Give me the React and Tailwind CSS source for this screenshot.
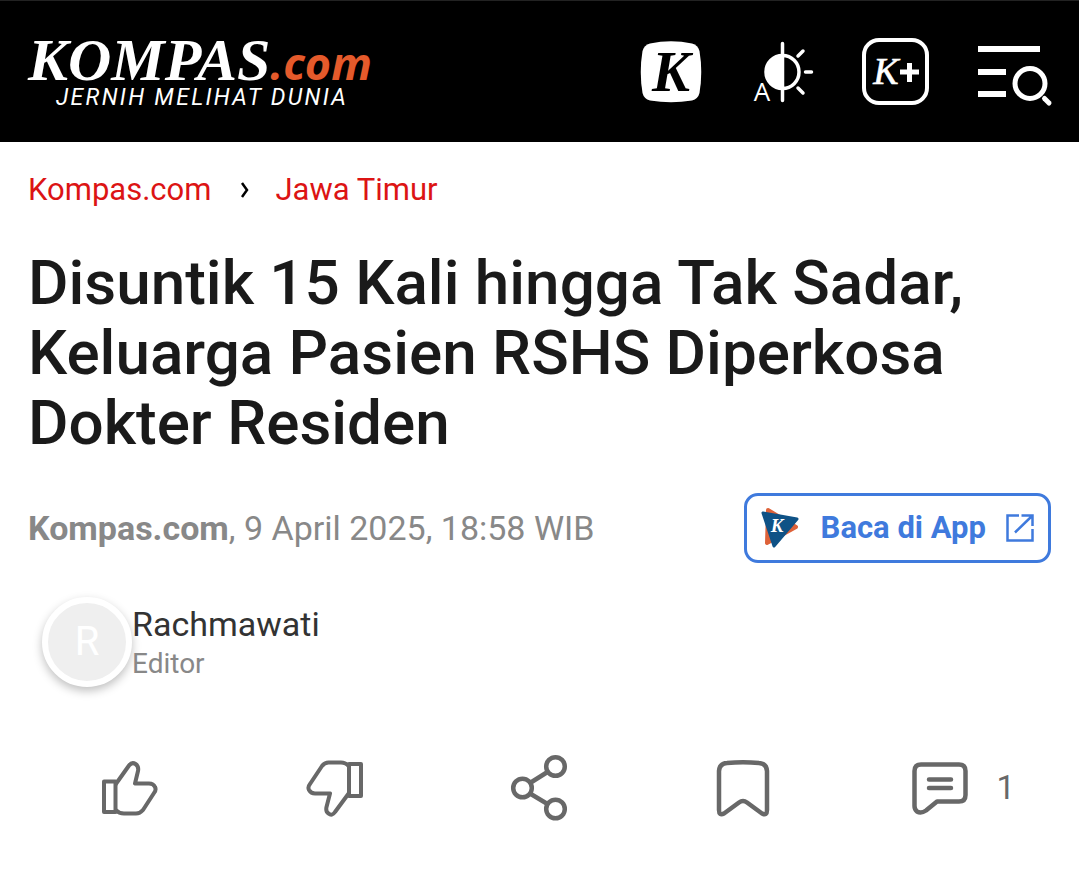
const KompasLogo = () => (
  <a href="#" className="flex flex-col pb-1 text-white">
    <span className="flex items-baseline italic">
      <span className="font-['Liberation_Serif',serif] font-bold text-[60px] leading-[60px]">KOMPAS</span>
      <span className="font-['Open_Sans',sans-serif] font-bold text-[45px] leading-[45px] text-[#e55a2b]">.com</span>
    </span>
    <span className="pl-7 -mt-1 text-[23px] leading-6 italic tracking-widest">JERNIH MELIHAT DUNIA</span>
  </a>
);

const KIcon = () => (
  <svg className="overflow-visible" width="62" height="62" viewBox="0 0 62 62">
    <path d="M10 2.500Q31-2 52 2.500Q58 4 59.500 10Q63 31 59.500 52Q58 58 52 59.500Q31 63 10 59.500Q4 58 2.500 52Q-1 31 2.500 10Q4 4 10 2.500Z" fill="#fff" />
    <text x="31" y="50" textAnchor="middle" fontFamily="Liberation Serif, serif" fontSize="57" fontWeight="700" fontStyle="italic">K</text>
  </svg>
);

const ThemeIcon = () => (
  <svg className="overflow-visible" width="60" height="62" viewBox="0 0 60 62" fill="none" stroke="#fff" strokeWidth="3.500" strokeLinecap="round">
    <circle cx="28.500" cy="31" r="16.500" />
    <path d="M28 14A17 17 0 0 0 11 31A17 17 0 0 0 28 48Z" fill="#fff" stroke="none" />
    <path d="M28.500 2.500V59.500M44 15L49 10M51.500 31H57.500M44 47L49 52" />
    <text x="8" y="60" textAnchor="middle" fontFamily="Open Sans, sans-serif" fontSize="26" fill="#fff" stroke="#000" strokeWidth="4" paintOrder="stroke">A</text>
  </svg>
);

const KPlusIcon = () => (
  <svg width="68" height="68" viewBox="0 0 68 68">
    <rect x="2" y="2" width="63" height="63" rx="15" fill="none" stroke="#fff" strokeWidth="4" />
    <text x="24" y="46" textAnchor="middle" fontFamily="Liberation Serif, serif" fontSize="38" fontStyle="italic" fill="#fff" stroke="#fff" strokeWidth="0.6">K</text>
    <path d="M38 34H57M47.500 25V44" stroke="#fff" strokeWidth="5" />
  </svg>
);

const MenuSearchIcon = () => (
  <svg width="76" height="62" viewBox="0 0 76 62" fill="none" stroke="#fff">
    <path d="M0 4H62M0 27H28M0 49H28" strokeWidth="6" />
    <circle cx="52" cy="38.500" r="15" strokeWidth="5" />
    <path d="M66.500 53.500L71 58" strokeWidth="5" strokeLinecap="round" />
  </svg>
);

const AppIcon = () => (
  <svg width="40" height="42" viewBox="0 0 40 42" strokeLinejoin="round">
    <path d="M7 3L35 20L6 36Z" fill="#de6239" stroke="#de6239" strokeWidth="4" />
    <path d="M2 6L36 12L13 39Z" fill="#0f5286" stroke="#0f5286" strokeWidth="3" />
    <text x="16" y="25" textAnchor="middle" fontFamily="Liberation Serif, serif" fontSize="19" fontWeight="700" fontStyle="italic" fill="#fff">K</text>
  </svg>
);

const OpenIcon = () => (
  <svg width="28" height="28" viewBox="0 0 28 28" fill="none" stroke="#3f7add" strokeWidth="2.5">
    <path d="M13 1.500H1.500V26.500H26.500V15" />
    <path d="M15.500 1.500H26.500V12M26.500 1.500L9 18.500" />
  </svg>
);

const LikeIcon = () => (
  <svg width="58" height="56" viewBox="0 0 58 56" fill="none" stroke="#686868" strokeWidth="4" strokeLinejoin="round">
    <path d="M3 21.500H14.500V52H3Z" />
    <path d="M14.500 24.500L28 5.500Q31 1.500 34.500 4Q38 6.500 37 11L34 23.500H48Q52.500 23.500 54 27Q55.500 30 53 33L42 50Q39 53.500 35 53.500H23Q18 53.500 14.500 50" />
  </svg>
);

const DislikeIcon = () => (
  <svg width="58" height="58" viewBox="0 0 58 58" fill="none" stroke="#686868" strokeWidth="4" strokeLinejoin="round">
    <path d="M43 5H55V37H43Z" />
    <path d="M43 34L29 53Q26 57.500 22.500 54.500Q19.500 52.500 20.500 48L24 34.500H9Q5 34.500 3 31Q1.500 28 4 25L16 7Q18.500 3.500 22.500 3.500H35Q40 3.500 43 7.500" />
  </svg>
);

const ShareIcon = () => (
  <svg width="58" height="68" viewBox="0 0 58 68" fill="none" stroke="#686868" strokeWidth="4.500">
    <circle cx="12.500" cy="34" r="9.300" />
    <circle cx="45.500" cy="12.500" r="9.300" />
    <circle cx="45.500" cy="55" r="9.300" />
    <path d="M20 29L37.500 18M20 39.500L37.500 50" />
  </svg>
);

const BookmarkIcon = () => (
  <svg width="56" height="58" viewBox="0 0 56 58" fill="none" stroke="#686868" strokeWidth="4.500" strokeLinejoin="round">
    <path d="M11 4Q27 2.500 43 4Q50.500 4.500 51 12V51Q51 57 46 54.500L31 43.500Q27 40.500 23 43.500L8 54.500Q3 57 3 51V12Q3.500 4.500 11 4Z" />
  </svg>
);

const CommentIcon = () => (
  <svg width="56" height="54" viewBox="0 0 56 54" fill="none" stroke="#686868" strokeWidth="4.500" strokeLinejoin="round" strokeLinecap="round">
    <path d="M9 3.500H47Q53.500 3.500 53.500 10V34Q53.500 40.500 47 40.500H25L14 49.500Q9 53 5 50.500Q2.500 48.500 2.500 45V10Q2.500 3.500 9 3.500Z" />
    <path d="M17 18.500H39M17 27H39" />
  </svg>
);

export default function App() {
  return (
    <div className="min-h-screen bg-white font-[Roboto,sans-serif]">
      <header className="flex items-center justify-between bg-black border-t border-[#222] pl-7 pr-6 h-[142px]">
        <KompasLogo />
        <nav className="flex items-center pr-px">
          <button aria-label="Kompas.id" className="mr-[52px]"><KIcon /></button>
          <button aria-label="Tema" className="mr-12"><ThemeIcon /></button>
          <button aria-label="Kompas Plus" className="mr-12"><KPlusIcon /></button>
          <button aria-label="Menu" className="pt-2"><MenuSearchIcon /></button>
        </nav>
      </header>

      <main className="px-7 pt-7">
        <nav className="flex items-center text-[31px] leading-10 text-[#dc1414]">
          <a href="#">Kompas.com</a>
          <svg className="ml-7 mr-[26px]" width="10" height="18" viewBox="0 0 10 18" fill="none" stroke="#000" strokeWidth="2.500">
            <path d="M3 2L8 9L3 16" />
          </svg>
          <a href="#">Jawa Timur</a>
        </nav>

        <h1 className="mt-[38px] text-[62px] leading-[70px] font-medium text-[#1a1a1a]">
          Disuntik 15 Kali hingga Tak Sadar, Keluarga Pasien RSHS Diperkosa Dokter Residen
        </h1>

        <div className="mt-[35px] flex items-center justify-between">
          <p className="text-[34px] leading-10 text-[#888]">
            <b className="font-bold">Kompas.com</b>, 9 April 2025, 18:58 WIB
          </p>
          <a href="#" className="flex items-center h-[70px] px-3.5 rounded-[14px] border-3 border-[#3f7add] text-[#3f7add] text-[31px] font-bold">
            <AppIcon />
            <span className="mx-5">Baca di App</span>
            <OpenIcon />
          </a>
        </div>

        <div className="mt-[34px] pl-3.5 flex items-center">
          <div className="size-[90px] rounded-full border-6 border-white bg-[#efefef] shadow-[0_4px_10px_rgba(0,0,0,0.25)] flex items-center justify-center text-[40px] text-white">
            R
          </div>
          <div className="pt-1">
            <p className="text-[34px] leading-10 text-[#333]">Rachmawati</p>
            <p className="text-[28px] leading-10 text-[#888]">Editor</p>
          </div>
        </div>

        <div className="mt-[67px] grid grid-cols-5 items-center">
          <button aria-label="Suka" className="flex justify-center"><LikeIcon /></button>
          <button aria-label="Tidak suka" className="flex justify-center"><DislikeIcon /></button>
          <button aria-label="Bagikan" className="flex justify-center"><ShareIcon /></button>
          <button aria-label="Simpan" className="flex justify-center"><BookmarkIcon /></button>
          <button aria-label="Komentar" className="flex items-center justify-end gap-7 pr-9 text-[33px] text-[#686868]">
            <CommentIcon />
            1
          </button>
        </div>
      </main>
    </div>
  );
}
